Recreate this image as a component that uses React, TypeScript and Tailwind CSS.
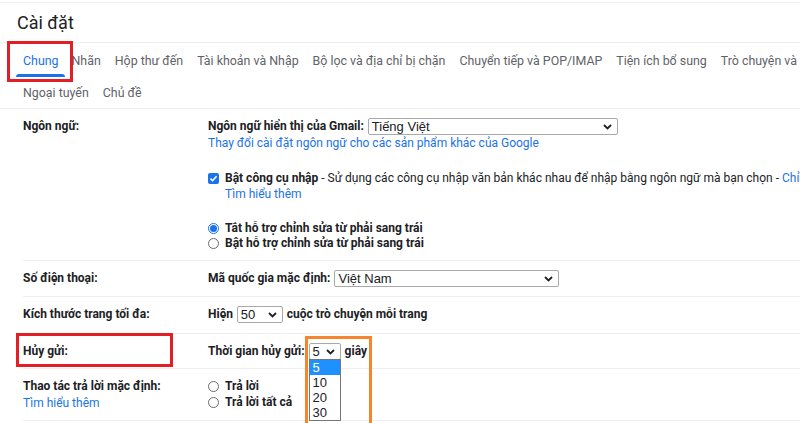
import React from "react";

function Chevron() {
  return (
    <svg width="9" height="6" viewBox="0 0 9 6" className="shrink-0">
      <path d="M1 1 L4.5 4.5 L8 1" fill="none" stroke="#202124" strokeWidth="1.8" />
    </svg>
  );
}

function FakeSelect({ value, w }: { value: string; w: string }) {
  return (
    <div
      className={`${w} h-[17px] border border-[#a9a9a9] rounded-[2px] bg-white flex items-center justify-between pl-[3px] pr-[5px] font-['Liberation_Sans',Arial,sans-serif] font-normal text-[13px] text-[#202124] leading-none`}
    >
      <span>{value}</span>
      <Chevron />
    </div>
  );
}

function Radio({ checked }: { checked?: boolean }) {
  return checked ? (
    <span className="w-[11px] h-[11px] rounded-full border border-[#1a73e8] flex items-center justify-center shrink-0">
      <span className="w-[7px] h-[7px] rounded-full bg-[#1a73e8]" />
    </span>
  ) : (
    <span className="w-[11px] h-[11px] rounded-full border border-[#6b6b6b] shrink-0" />
  );
}

const tabs1 = [
  "Chung",
  "Nhãn",
  "Hộp thư đến",
  "Tài khoản và Nhập",
  "Bộ lọc và địa chỉ bị chặn",
  "Chuyển tiếp và POP/IMAP",
  "Tiện ích bổ sung",
  "Trò chuyện và Meet",
];

export default function App() {
  return (
    <div className="w-[800px] h-[423px] overflow-hidden bg-white relative font-['Roboto','Liberation_Sans',sans-serif] text-[#202124]">
      <div className="w-[1000px]">
        <div className="mt-[2px] border-t border-[#f1f1f1]" />
        <div className="h-[39px] pt-[7px] pl-[17px] text-[18px] leading-[26px] text-[#202124]">
          Cài đặt
        </div>
        <div className="border-t border-[#efefef]" />
        <div className="h-[34px] pl-[16px] flex text-[12.4px] text-[#5f6368] whitespace-nowrap">
          {tabs1.map((t, i) => (
            <div
              key={t}
              className={`relative h-full pt-[2px] flex items-center ${i === 0 ? "text-[#1a73e8] pl-[7px] pr-[6px]" : "px-[7px]"}`}
            >
              {t}
              {i === 0 && (
                <div className="absolute left-0 right-0 bottom-0 h-[3px] bg-[#1a73e8] rounded-t-[3px]" />
              )}
            </div>
          ))}
        </div>
        <div className="h-[32px] pt-[2px] pl-[16px] flex items-center text-[12.4px] text-[#5f6368] border-b border-[#efefef]">
          <div className="px-[7px]">Ngoại tuyến</div>
          <div className="px-[7px]">Chủ đề</div>
        </div>

        <div className="ml-[23px] text-[12px] font-bold leading-[17px]">
          {/* Ngôn ngữ */}
          <div className="flex border-b border-[#efefef] pt-[9px] pb-[9px]">
            <div className="w-[185px]">Ngôn ngữ:</div>
            <div className="flex flex-col">
              <div className="h-[17px] flex items-center gap-[4px]">
                <span>Ngôn ngữ hiển thị của Gmail:</span>
                <FakeSelect value="Tiếng Việt" w="w-[250px]" />
              </div>
              <div className="h-[17px] flex items-center font-normal text-[#1a73e8]">
                Thay đổi cài đặt ngôn ngữ cho các sản phẩm khác của Google
              </div>
              <div className="mt-[18px] h-[16px] flex items-center whitespace-nowrap">
                <span className="w-[11px] h-[11px] rounded-[2px] bg-[#1a73e8] flex items-center justify-center mr-[6px] shrink-0">
                  <svg width="9" height="9" viewBox="0 0 9 9">
                    <path d="M1.5 4.6 L3.6 6.7 L7.6 2.2" fill="none" stroke="white" strokeWidth="1.6" />
                  </svg>
                </span>
                <span>Bật công cụ nhập</span>
                <span className="font-normal">
                  &nbsp;- Sử dụng các công cụ nhập văn bản khác nhau để nhập bằng ngôn ngữ mà bạn chọn -{" "}
                  <span className="text-[#1a73e8]">Chỉnh sửa công cụ</span>
                </span>
              </div>
              <div className="h-[17px] pl-[17px] flex items-center font-normal text-[#1a73e8]">
                Tìm hiểu thêm
              </div>
              <div className="mt-[18px] h-[15px] flex items-center gap-[6px]">
                <Radio checked />
                <span>Tắt hỗ trợ chỉnh sửa từ phải sang trái</span>
              </div>
              <div className="h-[15px] flex items-center gap-[6px]">
                <Radio />
                <span>Bật hỗ trợ chỉnh sửa từ phải sang trái</span>
              </div>
            </div>
          </div>

          {/* Số điện thoại */}
          <div className="flex border-b border-[#efefef] pt-[9px] pb-[9px]">
            <div className="w-[185px] h-[17px] flex items-center">Số điện thoại:</div>
            <div className="h-[17px] flex items-center gap-[4px]">
              <span>Mã quốc gia mặc định:</span>
              <FakeSelect value="Việt Nam" w="w-[225px]" />
            </div>
          </div>

          {/* Kích thước */}
          <div className="flex border-b border-[#efefef] pt-[9px] pb-[10px]">
            <div className="w-[185px] h-[17px] flex items-center">Kích thước trang tối đa:</div>
            <div className="h-[17px] flex items-center gap-[4px]">
              <span>Hiện</span>
              <FakeSelect value="50" w="w-[46px]" />
              <span>cuộc trò chuyện mỗi trang</span>
            </div>
          </div>

          {/* Hủy gửi */}
          <div className="relative flex border-b border-[#efefef] pt-[9px] pb-[8px]">
            <div className="w-[185px] h-[17px] flex items-center">Hủy gửi:</div>
            <div className="h-[17px] flex items-center gap-[4px]">
              <span>Thời gian hủy gửi:</span>
              <div className="relative">
                <FakeSelect value="5" w="w-[32px]" />
                <div className="absolute left-0 top-[16px] w-[32px] bg-white border border-[#767676] font-['Liberation_Sans',Arial,sans-serif] font-normal text-[13px] leading-[15px] z-10">
                  <div className="bg-[#1e90ff] text-white pl-[3px]">5</div>
                  <div className="pl-[3px]">10</div>
                  <div className="pl-[3px]">20</div>
                  <div className="pl-[3px]">30</div>
                </div>
              </div>
              <span>giây</span>
            </div>
            <div className="absolute left-[-7px] top-[-1px] w-[157px] h-[34px] border-[3px] border-[#e31e24] pointer-events-none" />
          </div>

          {/* Thao tác trả lời */}
          <div className="flex border-b border-[#efefef] pt-[9px] pb-[8px]">
            <div className="w-[185px] flex flex-col">
              <div className="h-[16px] flex items-center">Thao tác trả lời mặc định:</div>
              <div className="h-[18px] flex items-center font-normal text-[#1a73e8]">Tìm hiểu thêm</div>
            </div>
            <div className="flex flex-col">
              <div className="h-[16px] flex items-center gap-[6px]">
                <Radio />
                <span>Trả lời</span>
              </div>
              <div className="h-[17px] flex items-center gap-[6px]">
                <Radio />
                <span>Trả lời tất cả</span>
              </div>
            </div>
          </div>
        </div>
      </div>

      {/* Overlays */}
      <div className="absolute left-[7px] top-[41px] w-[66px] h-[41px] border-[3px] border-[#e31e24] pointer-events-none" />
      <div className="absolute left-[305px] top-[336px] w-[67px] h-[90px] border-[3px] border-[#f7852e] pointer-events-none z-20" />
    </div>
  );
}
